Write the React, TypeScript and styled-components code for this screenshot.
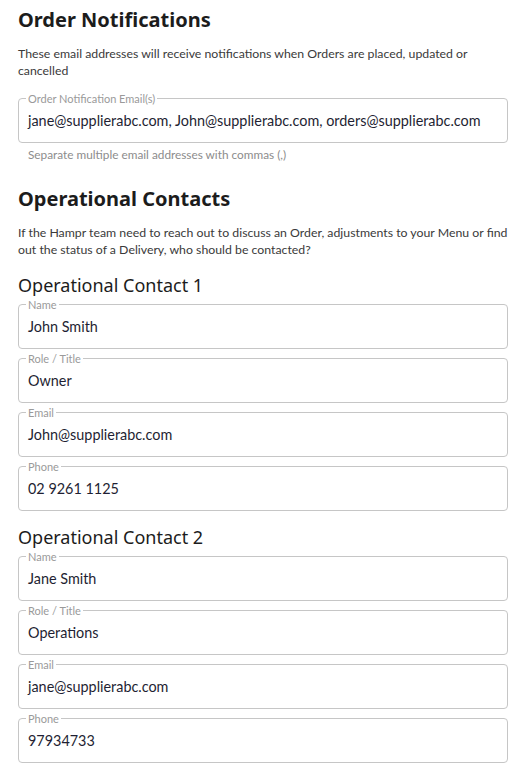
import React from "react";
import styled, { createGlobalStyle } from "styled-components";

const Global = createGlobalStyle`
  html, body { margin: 0; padding: 0; background: #fff; }
  body { font-family: Lato, "Noto Sans", sans-serif; -webkit-font-smoothing: antialiased; }
  * { box-sizing: border-box; }
`;

const Page = styled.main`
  width: 530px;
  padding: 6px 22px 12px 18px;
  display: flex;
  flex-direction: column;
`;

const Title = styled.h1<{ $top?: number }>`
  margin: ${(p) => p.$top ?? 0}px 0 0;
  font-family: "Noto Sans", Lato, sans-serif;
  font-weight: 700;
  font-size: 20px;
  line-height: 28px;
  color: #1c1c1c;
`;

const Desc = styled.p`
  margin: 11px 0 0;
  font-size: 12.3px;
  line-height: 17px;
  color: #3a3a3a;
`;

const SubTitle = styled.h2`
  margin: 0;
  font-family: "Noto Sans", Lato, sans-serif;
  font-weight: 400;
  font-size: 18px;
  line-height: 22px;
  color: #1c1c1c;
`;

const Group = styled.section<{ $top: number }>`
  margin-top: ${(p) => p.$top}px;
  display: flex;
  flex-direction: column;
`;

const Fields = styled.div`
  margin-top: 1px;
  display: flex;
  flex-direction: column;
  gap: 2px;
`;

const Field = styled.fieldset`
  margin: 0;
  padding: 0 9px;
  border: 1px solid #c6c6c6;
  border-radius: 4px;
  min-width: 0;
`;

const Legend = styled.legend`
  margin-left: -2px;
  padding: 1px 2px 0;
  font-size: 11px;
  line-height: 13px;
  color: #9a9a9a;
`;

const Value = styled.div`
  padding: 6px 0 11px 0;
  font-size: 14.4px;
  line-height: 20px;
  color: #1f1f33;
  white-space: nowrap;
`;

const Helper = styled.div`
  margin: 5px 0 0 10px;
  font-size: 11.8px;
  line-height: 14px;
  color: #8c8c8c;
`;

type Contact = { name: string; role: string; email: string; phone: string };

const contacts: Contact[] = [
  { name: "John Smith", role: "Owner", email: "John@supplierabc.com", phone: "02 9261 1125" },
  { name: "Jane Smith", role: "Operations", email: "jane@supplierabc.com", phone: "97934733" },
];

function OutlinedField({ label, value }: { label: string; value: string }) {
  return (
    <Field>
      <Legend>{label}</Legend>
      <Value>{value}</Value>
    </Field>
  );
}

export default function App() {
  return (
    <>
      <Global />
      <Page>
        <Title>Order Notifications</Title>
        <Desc>
          These email addresses will receive notifications when Orders are placed, updated or cancelled
        </Desc>
        <Group $top={12}>
          <OutlinedField
            label="Order Notification Email(s)"
            value="jane@supplierabc.com, John@supplierabc.com, orders@supplierabc.com"
          />
          <Helper>Separate multiple email addresses with commas (,)</Helper>
        </Group>
        <Title $top={23}>Operational Contacts</Title>
        <Desc>
          If the Hampr team need to reach out to discuss an Order, adjustments to your Menu or find out the
          status of a Delivery, who should be contacted?
        </Desc>
        {contacts.map((c, i) => (
          <Group key={i} $top={i === 0 ? 16 : 15}>
            <SubTitle>Operational Contact {i + 1}</SubTitle>
            <Fields>
              <OutlinedField label="Name" value={c.name} />
              <OutlinedField label="Role / Title" value={c.role} />
              <OutlinedField label="Email" value={c.email} />
              <OutlinedField label="Phone" value={c.phone} />
            </Fields>
          </Group>
        ))}
      </Page>
    </>
  );
}
